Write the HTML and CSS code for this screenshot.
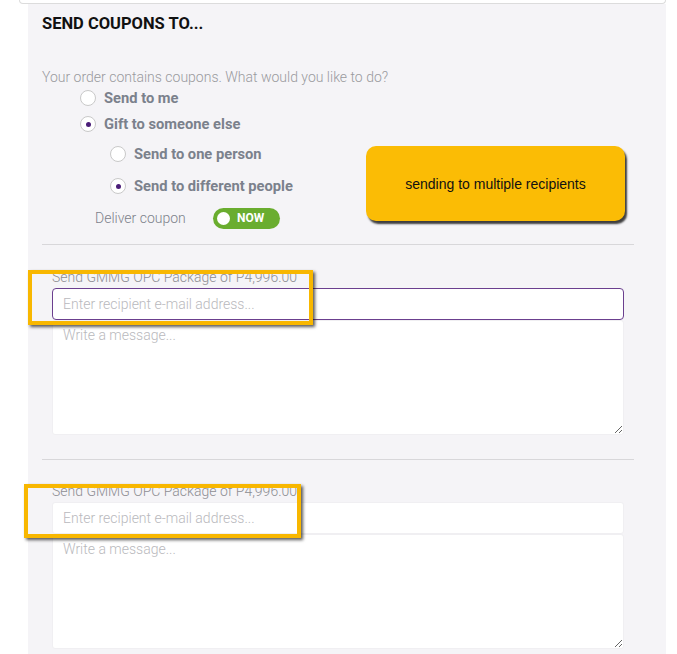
FILE: index.html
```html
<!DOCTYPE html>
<html lang="en">
<head>
    <meta charset="UTF-8" />
    <title>Send coupons</title>
    <link rel="stylesheet" href="styles.css">
</head>
<body>
    <div class="top-box"></div>
    <div class="panel">
        <h2 class="title">SEND COUPONS TO...</h2>
        <p class="prompt">Your order contains coupons. What would you like to do?</p>
        <div class="radio-row row-1"><span class="radio"></span>Send to me</div>
        <div class="radio-row row-2"><span class="radio checked"></span>Gift to someone else</div>
        <div class="radio-row sub row-3"><span class="radio"></span>Send to one person</div>
        <div class="radio-row sub row-4"><span class="radio checked"></span>Send to different people</div>
        <div class="deliver">
            <span class="deliver-label">Deliver coupon</span>
            <span class="toggle"><span class="knob"></span>NOW</span>
        </div>
        <hr class="divider">

        <div class="recipient">
            <div class="label">Send GMMG OPC Package of P4,996.00</div>
            <input type="text" class="email focused" placeholder="Enter recipient e-mail address...">
            <textarea class="message" placeholder="Write a message..."></textarea>
        </div>
        <hr class="divider second">

        <div class="recipient">
            <div class="label">Send GMMG OPC Package of P4,996.00</div>
            <input type="text" class="email" placeholder="Enter recipient e-mail address...">
            <textarea class="message" placeholder="Write a message..."></textarea>
        </div>
    </div>

    <div class="callout">sending to multiple recipients</div>
    <div class="highlight hl-1"></div>
    <div class="highlight hl-2"></div>
</body>
</html>
```

FILE: styles.css
```css
body {
    margin: 0;
    padding: 0;
    background: #fff;
    font-family: Roboto, "Liberation Sans", sans-serif;
    height: 654px;
    overflow: hidden;
    position: relative;
}
.top-box {
    margin-left: 19px;
    width: 645px;
    height: 3px;
    border: 1px solid #dcdcdc;
    border-top: none;
    border-radius: 0 0 4px 4px;
    background: #fff;
}
.panel {
    margin-left: 28px;
    width: 638px;
    height: 650px;
    background: #f5f4f7;
    padding: 10px 32px 0 14px;
    box-sizing: border-box;
}
.title {
    margin: 0;
    font-size: 16.5px;
    line-height: 20px;
    font-weight: 700;
    color: #111;
}
.prompt {
    margin: 33px 0 0;
    font-size: 14px;
    line-height: 20px;
    font-weight: 300;
    color: #9a9a9e;
}
.radio-row {
    display: flex;
    align-items: center;
    height: 22px;
    font-size: 14.7px;
    font-weight: 700;
    color: #7b818c;
    padding-left: 38px;
}
.radio-row.sub { padding-left: 68px; }
.row-1 { margin-top: 0; }
.row-2 { margin-top: 4px; }
.row-3 { margin-top: 8px; }
.row-4 { margin-top: 10px; }
.radio {
    width: 14px;
    height: 14px;
    border: 1px solid #c9c9c9;
    border-radius: 50%;
    background: #fff;
    margin-right: 8px;
    display: flex;
    align-items: center;
    justify-content: center;
}
.radio.checked::after {
    content: "";
    width: 5px;
    height: 5px;
    border-radius: 50%;
    background: #4a1d78;
}
.deliver {
    display: flex;
    align-items: center;
    height: 22px;
    margin-top: 10px;
    padding-left: 53px;
}
.deliver-label {
    font-size: 14px;
    font-weight: 300;
    color: #7d828b;
    width: 118px;
}
.toggle {
    display: flex;
    align-items: center;
    width: 67px;
    height: 21px;
    border-radius: 11px;
    background: #6aad2f;
    color: #fff;
    font-size: 12px;
    font-weight: 700;
    box-sizing: border-box;
    padding-left: 4px;
}
.knob {
    width: 13px;
    height: 13px;
    border-radius: 50%;
    background: #fff;
    margin-right: 7px;
}
.divider {
    margin: 15px 0 0;
    border: none;
    border-top: 1px solid #d8d7da;
    height: 0;
}
.divider.second { margin-top: 24px; }
.recipient {
    padding-left: 10px;
    margin-top: 23px;
}
.divider.second + .recipient { margin-top: 22px; }
.label {
    font-size: 14px;
    line-height: 18px;
    font-weight: 300;
    color: #8e8e93;
    margin-bottom: 2px;
}
.email, .message {
    display: block;
    width: 572px;
    box-sizing: border-box;
    font-family: Roboto, "Liberation Sans", sans-serif;
    font-size: 14px;
    font-weight: 300;
    background: #fff;
    border: 1px solid #f0eff2;
    border-radius: 3px;
    padding: 0 10px;
    outline: none;
}
.email { height: 32px; }
.email.focused { border-color: #6b3f8f; border-radius: 4px; }
.message {
    height: 115px;
    padding-top: 6px;
    resize: vertical;
}
.email::placeholder, .message::placeholder { color: #b9b9bd; }
.callout {
    position: absolute;
    left: 366px;
    top: 146px;
    width: 259px;
    height: 75px;
    background: #fbbc05;
    border-radius: 10px;
    box-shadow: 2px 3px 2px rgba(0, 0, 0, 0.75);
    display: flex;
    align-items: center;
    justify-content: center;
    font-family: "Liberation Sans", Arial, sans-serif;
    font-size: 14px;
    color: #111;
}
.highlight {
    position: absolute;
    border: 4px solid #f8b700;
    box-shadow: 2px 2px 3px rgba(0, 0, 0, 0.65);
    box-sizing: border-box;
}
.hl-1 { left: 28px; top: 270px; width: 285px; height: 55px; }
.hl-2 { left: 24px; top: 484px; width: 277px; height: 54px; }
```
